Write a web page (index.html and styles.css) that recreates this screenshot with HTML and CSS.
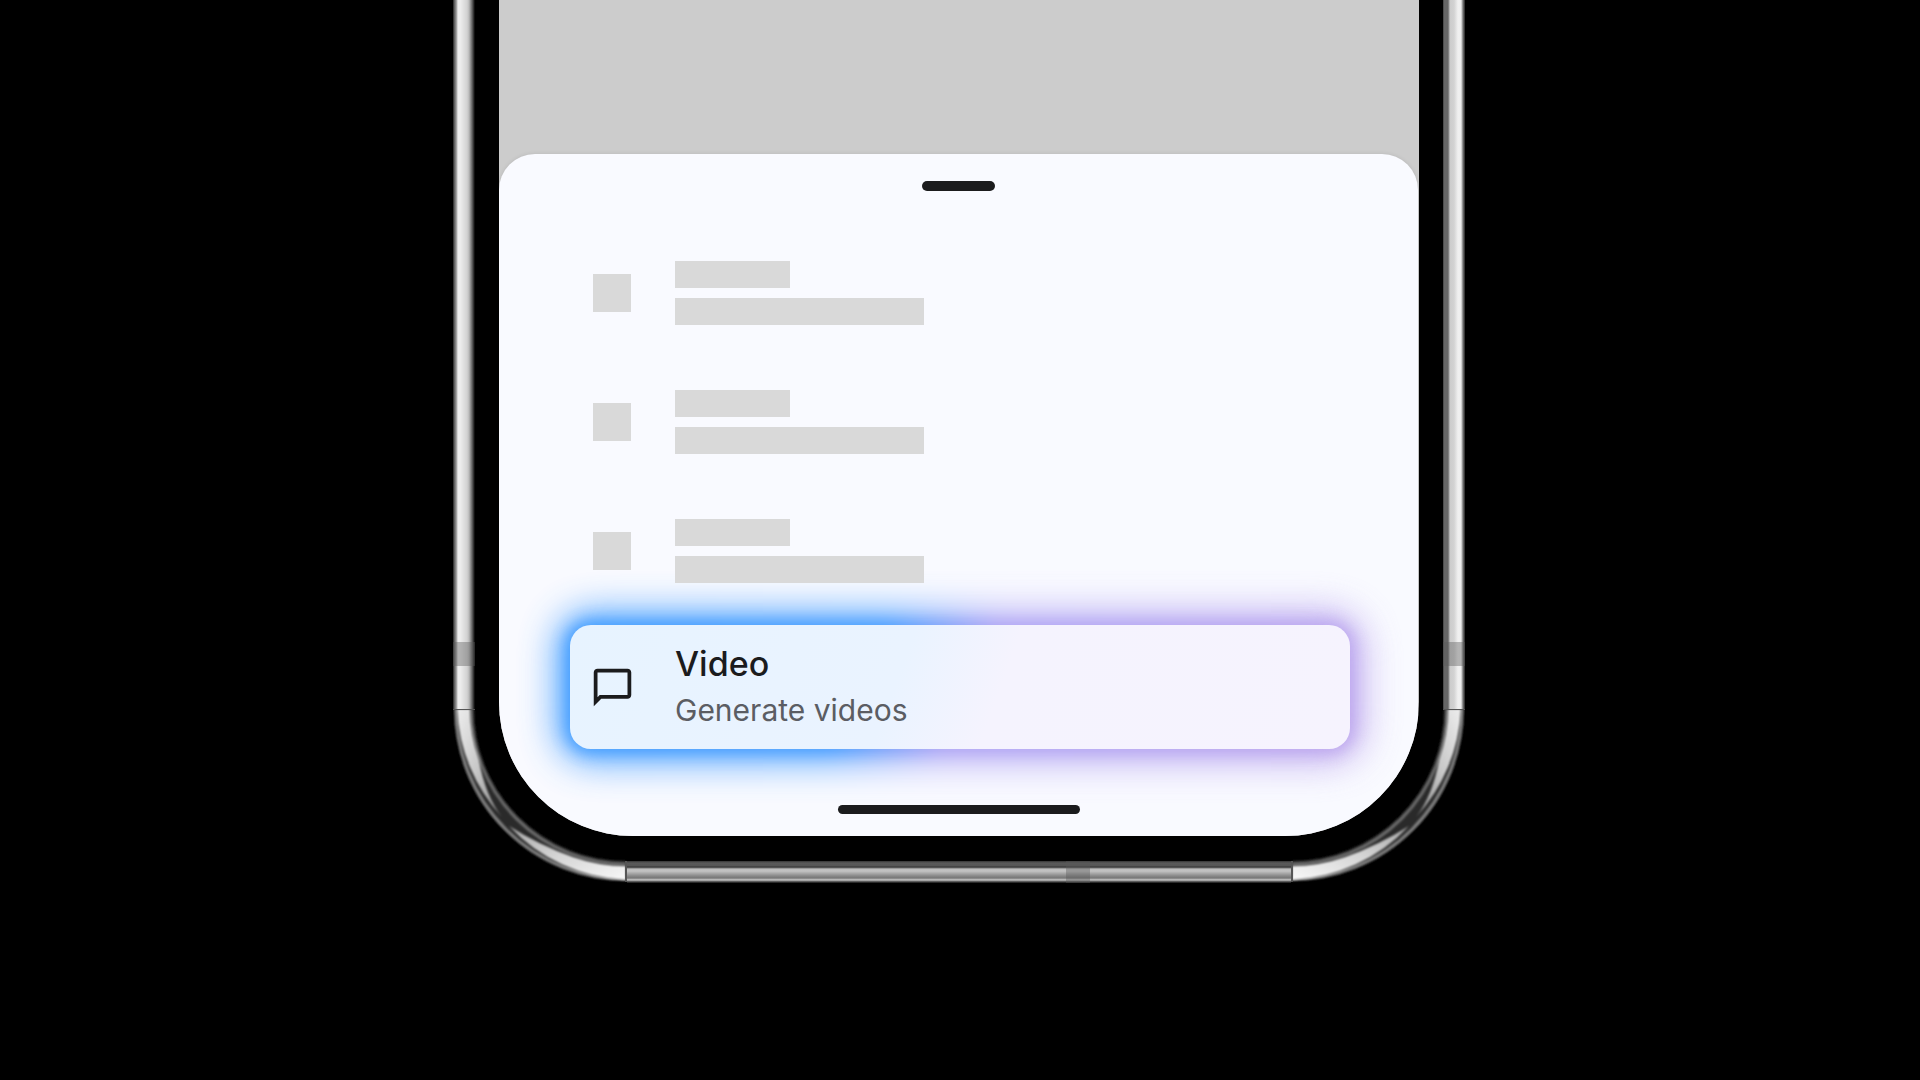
FILE: index.html
```html
<!DOCTYPE html>
<html lang="en">
<head>
    <meta charset="UTF-8">
    <meta name="viewport" content="width=device-width, initial-scale=1.0">
    <title>Video</title>
    <link rel="stylesheet" href="styles.css">
</head>
<body>
    <div class="phone">
        <!-- metal frame -->
        <div class="rail rail-left"><span class="antenna"></span></div>
        <div class="rail rail-right"><span class="antenna"></span></div>
        <svg class="corner corner-left" viewBox="0 0 174 174" aria-hidden="true">
            <defs>
                <linearGradient id="shineSide" x1="0" y1="0" x2="1" y2="1">
                    <stop offset="0" stop-color="#ededed"/>
                    <stop offset="0.5" stop-color="#c8c8c8"/>
                    <stop offset="1" stop-color="#8c8c8c"/>
                </linearGradient>
                <linearGradient id="shineBottom" x1="0" y1="0" x2="1" y2="1">
                    <stop offset="0" stop-color="#a8a8a8"/>
                    <stop offset="0.5" stop-color="#d6d6d6"/>
                    <stop offset="1" stop-color="#f8f8f8"/>
                </linearGradient>
                <filter id="soft" x="-10%" y="-10%" width="120%" height="120%">
                    <feGaussianBlur stdDeviation="1"/>
                </filter>
                <g id="cornerArt">
                    <path d="M11 0A162 162 0 0 0 173 162" fill="none" stroke="#2c2c2c" stroke-width="20" filter="url(#soft)"/>
                    <path d="M3 0A170 170 0 0 0 173 170" fill="none" stroke="#808080" stroke-width="3" filter="url(#soft)"/>
                    <path d="M18 0A155 155 0 0 0 173 155" fill="none" stroke="#6a6a6a" stroke-width="3" filter="url(#soft)"/>
                    <path d="M4 0A169 169 0 0 0 49 108C38 94 30 74 26 51Q17 26 17 0Z" fill="url(#shineSide)" filter="url(#soft)"/>
                    <path d="M56 117A169 169 0 0 0 173 171V157Q146 157 120 148Q86 136 56 117Z" fill="url(#shineBottom)" filter="url(#soft)"/>
                    <path d="M0 0H22M173 152V173" stroke="#555" stroke-width="2"/>
                </g>
            </defs>
            <use href="#cornerArt"/>
        </svg>
        <div class="rail-bottom"><span class="antenna"></span></div>
        <svg class="corner corner-right" viewBox="0 0 174 174" aria-hidden="true">
            <use href="#cornerArt" transform="translate(174 0) scale(-1 1)"/>
        </svg>

        <main class="screen">
            <section class="sheet">
                <div class="handle"></div>
                <div class="list">
                    <div class="placeholder">
                        <div class="thumb"></div>
                        <div class="lines">
                            <div class="line line-short"></div>
                            <div class="line"></div>
                        </div>
                    </div>
                    <div class="placeholder">
                        <div class="thumb"></div>
                        <div class="lines">
                            <div class="line line-short"></div>
                            <div class="line"></div>
                        </div>
                    </div>
                    <div class="placeholder">
                        <div class="thumb"></div>
                        <div class="lines">
                            <div class="line line-short"></div>
                            <div class="line"></div>
                        </div>
                    </div>
                </div>
                <button class="option" type="button">
                    <svg class="option-icon" viewBox="0 0 24 24" aria-hidden="true">
                        <path d="M20 2H4c-1.1 0-2 .9-2 2v18l4-4h14c1.1 0 2-.9 2-2V4c0-1.1-.9-2-2-2zm0 14H5.17L4 17.17V4h16v12z"/>
                    </svg>
                    <span class="option-text">
                        <span class="option-title">Video</span>
                        <span class="option-desc">Generate videos</span>
                    </span>
                </button>
                <div class="home-bar"></div>
            </section>
        </main>
    </div>
</body>
</html>
```
FILE: styles.css
```css
* {
    box-sizing: border-box;
}

body {
    margin: 0;
    min-height: 100vh;
    padding-right: 2px;
    background: #000;
    font-family: Inter, "Open Sans", sans-serif;
}

/* phone frame: rails and corners sit on a grid, the screen covers all cells */
.phone {
    display: grid;
    grid-template-columns: 174px 1fr 174px;
    grid-template-rows: 1fr 174px;
    width: 100%;
    max-width: 1012px;
    margin: 0 auto;
}

.rail {
    display: flex;
    flex-direction: column;
    justify-content: flex-end;
    grid-row: 1;
    width: 22px;
    padding-bottom: 43px;
}

.rail-left {
    grid-column: 1;
    background: linear-gradient(to right, #222 0, #777 2px, #8a8a8a 3px, #eee 5px, #eee 7px, #d2d2d2 14px, #bbb 16px, #666 19px, #222 21px, #000 22px);
}

.rail-right {
    grid-column: 3;
    justify-self: end;
    background: linear-gradient(to right, #333 0, #666 1px, #666 5px, #999 6px, #ccc 7px, #d2d2d2 11px, #f0f0f0 15px, #eee 18px, #777 20px, #222 22px);
}

.antenna {
    background: rgba(90, 90, 90, 0.4);
}

.rail .antenna {
    height: 24px;
}

.corner {
    grid-row: 2;
    width: 174px;
    height: 174px;
}

.corner-left {
    grid-column: 1;
}

.corner-right {
    grid-column: 3;
}

.rail-bottom {
    display: flex;
    justify-content: flex-end;
    grid-column: 2;
    grid-row: 2;
    align-self: end;
    height: 22px;
    padding-right: 201px;
    background: linear-gradient(#333 0, #5a5a5a 2px, #555 5px, #333 6px, #bbb 8px, #c4c4c4 10px, #888 15px, #777 17px, #ccc 19px, #777 20px, #111 22px);
}

.rail-bottom .antenna {
    width: 24px;
}

.screen {
    grid-column: 1 / -1;
    grid-row: 1 / -1;
    margin: 0 46px 47px;
    padding: 154px 1px 0 0;
    overflow: hidden;
    background: #ccc;
    border-radius: 0 0 134px 134px;
}

/* bottom sheet */
.sheet {
    isolation: isolate;
    display: flex;
    flex-direction: column;
    padding: 27px 0 22px;
    background: #f9faff;
    border-radius: 36px 36px 0 0;
    box-shadow: 0 0 4px rgba(0, 0, 0, 0.1);
}

.handle {
    align-self: center;
    width: 73px;
    height: 10px;
    border-radius: 5px;
    background: #1b1b1d;
}

.list {
    display: flex;
    flex-direction: column;
    gap: 65px;
    padding: 70px 94px 42px;
}

.placeholder {
    display: flex;
    align-items: center;
    gap: 44px;
}

.thumb {
    width: 38px;
    height: 38px;
    background: #d9d9d9;
}

.lines {
    display: flex;
    flex-direction: column;
    gap: 10px;
}

.line {
    width: 249px;
    height: 27px;
    background: #d9d9d9;
}

.line-short {
    width: 115px;
}

/* highlighted option with a coloured glow behind it */
.option {
    position: relative;
    display: flex;
    align-items: center;
    gap: 40px;
    height: 124px;
    margin: 0 68px 0 71px;
    padding: 0 20px;
    border: none;
    border-radius: 21px;
    background: linear-gradient(110deg, #e7f3ff 0, #eaf3ff 42%, #f5f3fe 55%, #f6f3fe 100%);
    color: #1b1b1d;
    font-family: inherit;
    text-align: left;
    cursor: pointer;
}

.option::before,
.option::after {
    content: "";
    position: absolute;
    z-index: -1;
    background: linear-gradient(115deg, #3295ff 0, #3d98ff 38%, #aba0f4 51%, #b9a0ec 100%);
}

.option::before {
    inset: -14px;
    border-radius: 36px;
    filter: blur(18px);
    opacity: 0.8;
}

.option::after {
    inset: -4px;
    border-radius: 25px;
    filter: blur(8px);
    opacity: 0.8;
}

.option-icon {
    width: 45px;
    height: 45px;
    fill: #1b1b1d;
}

.option-text {
    display: flex;
    flex-direction: column;
    gap: 6px;
}

.option-title {
    font-size: 34px;
    font-weight: 500;
    line-height: 40px;
}

.option-desc {
    color: #5b5d63;
    font-size: 30px;
    line-height: 40px;
}

.home-bar {
    align-self: center;
    width: 242px;
    height: 9px;
    margin-top: 56px;
    border-radius: 5px;
    background: #1b1b1d;
}
```
